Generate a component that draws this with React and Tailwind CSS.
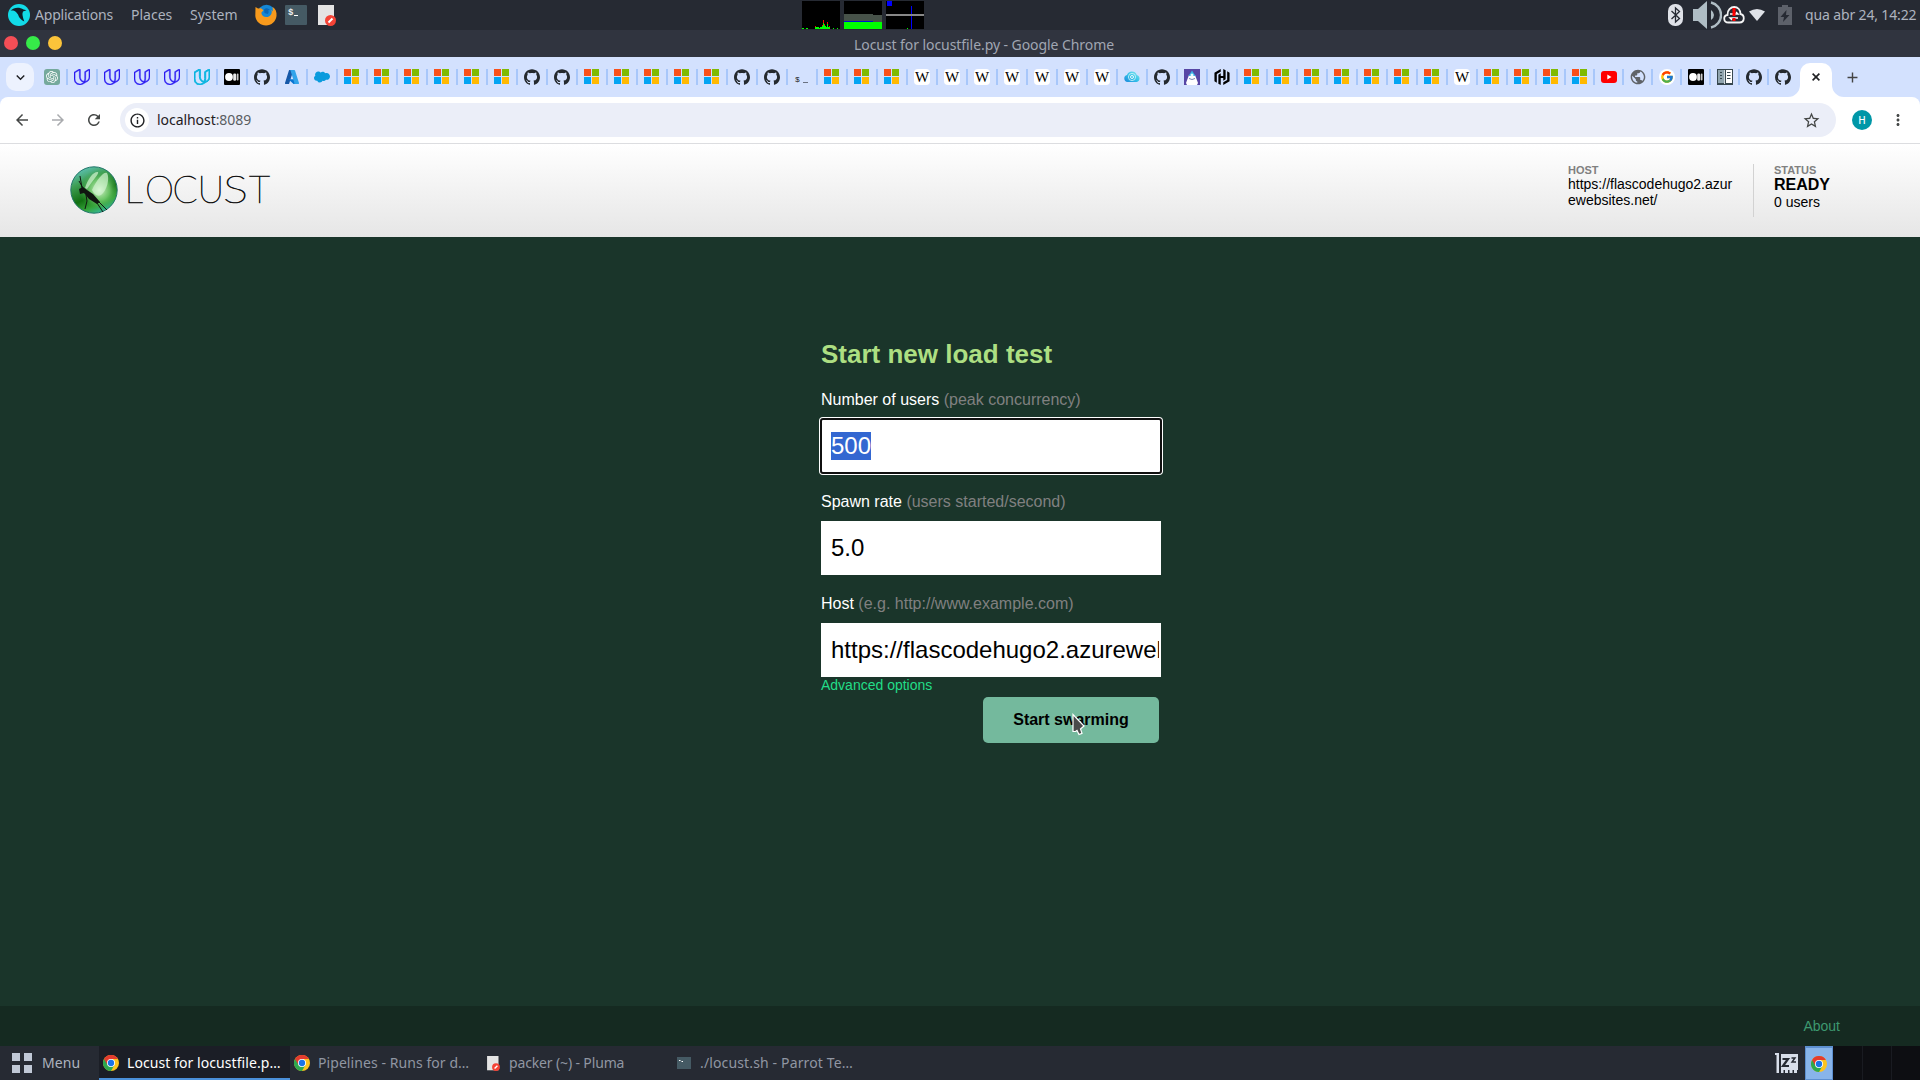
import React from "react";
import { SiUdacity, SiGithub, SiSalesforce, SiHashicorp, SiOpenai } from "react-icons/si";
import { FcGoogle } from "react-icons/fc";
import { MdArrowBack, MdArrowForward, MdRefresh, MdStarBorder, MdMoreVert, MdExpandMore, MdInfoOutline, MdAdd, MdPublic } from "react-icons/md";

const UI = "font-['Noto_Sans',sans-serif]";
const PAGE = "font-['Liberation_Sans',Arial,sans-serif]";

function Microsoft() {
  return (
    <svg className="size-4" viewBox="0 0 16 16" shapeRendering="crispEdges">
      <path fill="#f9501b" d="M0 0h7v7H0z" />
      <path fill="#80ba01" d="M8 0h7v7H8z" />
      <path fill="#03a4f3" d="M0 8h7v7H0z" />
      <path fill="#ffb901" d="M8 8h7v7H8z" />
    </svg>
  );
}

function Medium() {
  return (
    <svg className="size-4" viewBox="0 0 16 16">
      <rect width="16" height="16" rx="1" fill="#000" />
      <circle cx="5" cy="8" r="3.900" fill="#fff" />
      <rect x="9.200" y="4.400" width="3" height="7.400" rx="1.400" fill="#e8e8e8" />
      <rect x="12.800" y="4.600" width="1.700" height="7" rx=".8" fill="#c8c8c8" />
    </svg>
  );
}

function Azure() {
  return (
    <svg className="size-4" viewBox="0 0 16 16">
      <path d="M5.300 1h4.200L5.200 14.400q-.2.6-.8.6H1.600q-.9 0-.6-.9L4.900 1.600z" fill="#1558a8" />
      <path d="M4.400 10.200h7L13 15H9.500z" fill="#0a74d1" />
      <path d="M6 1h4.300q.5 0 .7.6l4 12.500q.3.900-.6.900H9.800q.9 0 .6-.9L6.500 1.600z" fill="#31a3ea" />
    </svg>
  );
}

function Cloud() {
  return (
    <svg className="size-4" viewBox="0 0 16 16">
      <defs>
        <linearGradient id="cloudFill" x1="0" x2="1" y1="1" y2="0">
          <stop offset="0" stopColor="#1b87dc" />
          <stop offset=".5" stopColor="#35c3e8" />
          <stop offset="1" stopColor="#8be8f0" />
        </linearGradient>
      </defs>
      <path fill="url(#cloudFill)" d="M3.500 13A3.500 3.500 0 0 1 3 6.100 5.200 5.200 0 0 1 12.800 6a3.600 3.600 0 0 1-.1 7z" />
      <circle cx="8" cy="8" r="3.600" fill="none" stroke="#d6f6fb" strokeWidth=".8" />
      <circle cx="8" cy="8" r="1.500" fill="none" stroke="#fff" strokeWidth=".9" />
    </svg>
  );
}

function Mountain() {
  return (
    <svg className="size-4" viewBox="0 0 16 16">
      <path fill="#5746a5" d="M0 0h16v16H0z" />
      <path fill="#fff" d="M5 6h6l3 8-1 2H3l-1-2z" />
      <path fill="#3db4e5" d="M8 1.500 11.500 7H4.500z" />
      <circle cx="8" cy="6" r="1.500" fill="#e9fbff" />
      <path d="M5 9.500q3 2 6 0" stroke="#7d85b2" fill="none" />
    </svg>
  );
}

function Book() {
  return (
    <svg className="size-4" viewBox="0 0 16 16">
      <path fill="#37474f" d="M0 0h16v16H0z" />
      <path fill="#90a4ae" d="M1 1h6v13H1z" />
      <path fill="#fff" d="M9 1h6v13H9z" />
      <path d="M3 3.500h2M3 6.500h2M3 9.500h2M10 3.500h3.500M10 6.500h3.500M10 9.500h3.500" stroke="#37474f" />
      <path fill="#cfd8dc" d="M7 1h1v14H7z" />
    </svg>
  );
}

function YouTube() {
  return (
    <svg className="size-4" viewBox="0 0 16 16">
      <rect y="2" width="16" height="12" rx="3" fill="#f00" />
      <path fill="#fff" d="m6.300 5.600 4.200 2.400-4.200 2.400z" />
    </svg>
  );
}

function Chrome() {
  return (
    <svg className="size-4 shrink-0" viewBox="0 0 48 48">
      <circle cx="24" cy="24" r="24" fill="#fcc31e" />
      <path fill="#2da94f" d="M3.200 12A24 24 0 0 0 24 48L34.400 30 24 24z" />
      <path fill="#e33b2e" d="M3.200 12A24 24 0 0 1 44.800 12H24v12L13.600 30z" />
      <circle cx="24" cy="24" r="12" fill="#fff" />
      <circle cx="24" cy="24" r="9.500" fill="#1a73e8" />
    </svg>
  );
}

function Favicon({ kind }) {
  switch (kind) {
    case "m": return <Microsoft />;
    case "u": return <SiUdacity className="size-4 stroke-[#2c1cf2] stroke-[0.6] text-[#2c1cf2]" />;
    case "c": return <SiUdacity className="size-4 stroke-[#09b5e0] stroke-[1.4] text-[#09b5e0]" />;
    case "g": return <SiGithub className="size-4 text-[#24292e]" />;
    case "o":
      return (
        <span className="flex size-4 items-center justify-center rounded-[3px] bg-[#75a99c]">
          <SiOpenai className="size-3 text-white" />
        </span>
      );
    case "d": return <Medium />;
    case "a": return <Azure />;
    case "s": return <SiSalesforce className="size-4 text-[#0a9bdd]" />;
    case "t": return <span className="flex size-4 items-end gap-[3px] pl-px font-['Liberation_Mono',monospace] text-[8px] leading-[11px] text-[#222]"><span>$</span><i className="mb-[2px] h-px w-[5px] bg-gray-500" /></span>;
    case "w": return <span className="flex size-4 items-center justify-center overflow-hidden rounded-[4px] bg-white font-['Liberation_Serif',serif] text-[15px] leading-4 text-black">W</span>;
    case "l": return <Cloud />;
    case "j": return <Mountain />;
    case "h": return <SiHashicorp className="size-4 text-black" />;
    case "y": return <YouTube />;
    case "p": return <MdPublic className="size-4 scale-110 text-[#5f6368]" />;
    case "G": return <span className="flex size-4 items-center justify-center rounded-full bg-white"><FcGoogle className="size-[14px]" /></span>;
    default: return <Book />;
  }
}

const TABS = "ouuuucdgasmmmmmmggmmmmmggtmmmwwwwwwwlgjhmmmmmmmwmmmmypGdbgg".split("");

function Editor({ className }) {
  return (
    <svg className={className} viewBox="0 0 18 21">
      <path fill="#e4e4e4" d="M0 0h16v20H0z" />
      <circle cx="12.500" cy="15.500" r="5.500" fill="#f44336" />
      <path d="m10.500 17.500 4-4" stroke="#fff" strokeWidth="2" />
    </svg>
  );
}

function TopPanel() {
  return (
    <div className={`${UI} flex h-[30px] shrink-0 items-center bg-[#262a33] text-[14px] text-[#adb3bf]`}>
      <div className="flex w-[600px] items-center pl-2">
        <svg className="size-[22px]" viewBox="0 0 22 22">
          <circle cx="11" cy="11" r="11" fill="#12dbe8" />
          <path fill="#101d29" d="M2.500 6.800C6 3 11.500 2.700 15.500 5.600l3 .6-3.500 1.200q-.8 2-.5 3.600.5 3.500 1.800 6.500-5-2.500-6.300-7L8 8C6 6.500 4.200 6.200 2.500 6.800z" />
        </svg>
        <span className="mb-px ml-[5px] w-24 tracking-[-0.015em]">Applications</span>
        <span className="mb-px w-[59px]">Places</span>
        <span className="mb-px w-[65px]">System</span>
        <svg className="size-[22px]" viewBox="0 0 22 22">
          <circle cx="11.500" cy="10" r="9.200" fill="#1587d4" />
          <path fill="#f79a1c" d="M.5 3 3 4.500l3-.3 2.500 2-2.200 2.500c.3 4 4.700 5.500 8 3.500 2.500-1.600 3-4 2-6.500L18 7.500 17.500 3c3 1.600 4.500 5 4 9-.7 5.500-5 9.500-10.500 9.500S.8 17.500.3 12z" />
          <path fill="#0b67b5" d="M9 5.500q3-2.500 6 .5l-2 .500q1.500 2-.5 3.500l-3-1z" />
        </svg>
        <svg className="ml-2 h-5 w-[22px]" viewBox="0 0 22 20">
          <rect width="22" height="20" rx="1" fill="#455a64" />
          <path d="M9 10.500h4" stroke="#fff" />
          <text x="3" y="10" fontSize="9" fontWeight="bold" fill="#eee" fontFamily="Liberation Mono">$</text>
        </svg>
        <Editor className="ml-[11px] h-[21px] w-[18px]" />
      </div>
      <div className="ml-[202px] flex gap-1">
        <svg className="h-7 w-[38px] bg-black" viewBox="0 0 38 28" shapeRendering="crispEdges">
          <path fill="#0f0" d="M0 27h2v1H0zM4 27h2v1H4zM13 26h4v2h-4zM17 27h1v1h-1zM18 26h2v2h-2zM20 24h1v4h-1zM21 21h1v7h-1zM22 23h1v5h-1zM23 25h1v3h-1zM24 26h1v2h-1zM25 23h1v5h-1zM26 26h2v2h-2zM31 27h1v1h-1zM35 27h1v1h-1z" />
          <path fill="red" d="M13 25h1v1h-1zM21 19h1v3h-1zM22 23h1v1h-1zM25 21h1v2h-1zM27 25h1v1h-1zM20 24h1v1h-1z" />
        </svg>
        <svg className="h-7 w-[38px] bg-black" viewBox="0 0 38 28" shapeRendering="crispEdges">
          <path fill="#475249" d="M0 13h29v8H0zM29 14h9v7h-9z" />
          <path fill="#0010d0" d="M0 20h29v1H0z" />
          <path fill="#0f0" d="M0 21h38v7H0z" />
        </svg>
        <svg className="h-7 w-[38px] bg-black" viewBox="0 0 38 28" shapeRendering="crispEdges">
          <path fill="#00f" d="M1 0h5v5H1zM25 5h1v23h-1z" />
          <path fill="#888" d="M0 13h38v2H0z" />
          <path fill="#0f0" d="M21 27h1v1h-1z" />
        </svg>
      </div>
      <div className="ml-auto flex items-center pr-1">
        <svg className="h-[22px] w-[15px]" viewBox="0 0 15 22">
          <rect width="15" height="22" rx="7" fill="#dfe2e8" />
          <path d="m3.500 7 8 7.500L7.500 18V4l4 3.500-8 7.500" fill="none" stroke="#262a33" strokeWidth="1.300" />
        </svg>
        <svg className="ml-[10px] h-[30px] w-[29px]" viewBox="0 0 29 30">
          <path fill="#b0bec5" d="M0 9h5l9-8v28l-9-8H0zM18 10q3 2 3 5t-3 5z" />
          <path fill="none" stroke="#b0bec5" strokeWidth="2.400" d="M18 2.500a12.800 12.800 0 0 1 0 25" />
        </svg>
        <svg className="ml-px h-[18px] w-[22px]" viewBox="0 0 22 18">
          <path fill="none" stroke="#f5f5f5" strokeWidth="1.800" d="M5.500 16.500C0 16.500 0 9.500 4.500 9 4 4 8 1 11.200 1c3.500 0 6.200 2.500 6.300 7C22 9 22 16.500 16.500 16.500z" />
          <path d="M7 8h8l-2-2M15 12H7l2 2" stroke="#fff" strokeWidth="1.400" fill="none" />
          <path fill="red" d="M9.500 2h3v8h-3zM9.500 12h3v3h-3z" />
        </svg>
        <svg className="ml-1 h-3 w-4" viewBox="0 0 16 12"><path fill="#dfe2e8" d="M0 2.500q8-5 16 0L8 12z" /></svg>
        <svg className="ml-[13px] h-5 w-[14px]" viewBox="0 0 14 20">
          <path fill="#5d616a" d="M4 0h6v2h4v18H0V2h4z" />
          <path fill="#262a33" d="m8.500 5-6 7h3.500l-1 5 6.500-7H8z" />
        </svg>
        <span className="mb-px ml-[13px] w-[111px] tracking-[-0.01em] whitespace-nowrap">qua abr 24, 14:22</span>
      </div>
    </div>
  );
}

function TitleBar() {
  return (
    <div className={`${UI} grid h-[27px] shrink-0 grid-cols-[854px_1fr] items-center bg-[#30343f] text-[14px] tracking-[-0.005em] text-[#a0a6b2]`}>
      <div className="-mt-px flex gap-2 pl-1">
        <i className="size-[14px] rounded-full bg-[#f54e56]" />
        <i className="size-[14px] rounded-full bg-[#36eb49]" />
        <i className="size-[14px] rounded-full bg-[#fcc43a]" />
      </div>
      <span className="mt-[3px] leading-5">Locust for locustfile.py - Google Chrome</span>
    </div>
  );
}

function TabStrip() {
  return (
    <div className="flex h-10 shrink-0 items-center bg-[#d3e1fe]">
      <div className="ml-1.5 mr-1 flex size-7 items-center justify-center rounded-[10px] bg-[#edf2fe] text-[#1f2023]">
        <MdExpandMore className="size-[17px]" />
      </div>
      {TABS.map((kind, i) => (
        <div key={i} className={i > 48 ? "flex w-[29px] shrink-0 items-center justify-between pl-1.5" : "flex w-[30px] shrink-0 items-center justify-between pl-1.5"}>
          <Favicon kind={kind} />
          <i className={i === TABS.length - 1 ? "h-4 w-0.5" : "h-4 w-0.5 bg-[#a8c7fa]"} />
        </div>
      ))}
      <div className="ml-[-10px] flex h-10 shrink-0 items-end">
        <svg className="size-3" viewBox="0 0 12 12"><path fill="#fff" d="M12 0v12H0A12 12 0 0 0 12 0z" /></svg>
        <div className="flex h-[34px] w-8 items-center justify-center rounded-t-[10px] bg-white pb-[6px]">
          <svg className="size-2" viewBox="0 0 8 8"><path d="m.6.6 6.800 6.800M7.400.6.6 7.400" stroke="#1f2023" strokeWidth="1.600" /></svg>
        </div>
        <svg className="size-3" viewBox="0 0 12 12"><path fill="#fff" d="M0 0v12h12A12 12 0 0 1 0 0z" /></svg>
      </div>
      <MdAdd className="size-[17px] text-[#444]" />
    </div>
  );
}

function Toolbar() {
  return (
    <div className="shrink-0 bg-[#d3e1fe]">
      <div className={`${UI} flex h-[47px] items-center rounded-t-[8px] border-b border-[#dcdde0] bg-white text-[#444746]`}>
        <div className="flex w-[120px] items-center gap-[18px] pl-[13px]">
          <MdArrowBack className="size-[18px]" />
          <MdArrowForward className="size-[18px] text-[#a9abae]" />
          <MdRefresh className="size-[18px]" />
        </div>
        <div className="flex h-[34px] w-[1716px] items-center rounded-full bg-[#ebeef8] pl-[5px]">
          <span className="flex size-6 items-center justify-center rounded-full bg-white text-[#1f2023]"><MdInfoOutline className="size-[17px]" /></span>
          <span className="mb-px ml-2 text-[14px] tracking-[-0.004em] text-[#1f2023]">localhost<span className="text-[#5a5d62]">:8089</span></span>
          <MdStarBorder className="ml-auto mr-[15px] size-[19px]" />
        </div>
        <span className="ml-4 flex size-5 items-center justify-center rounded-full bg-[#0097a7] text-[10px] font-medium text-white">H</span>
        <MdMoreVert className="ml-[17px] size-[18px]" />
      </div>
    </div>
  );
}

function LocustLogo() {
  return (
    <svg className="h-12 w-[204px]" viewBox="0 0 204 48" role="img" aria-label="Locust">
      <defs>
        <linearGradient id="orb" x1=".2" x2=".65" y1="0" y2="1">
          <stop offset="0" stopColor="#62c6c4" />
          <stop offset=".3" stopColor="#3f9f55" />
          <stop offset=".62" stopColor="#126f12" />
          <stop offset=".82" stopColor="#35a53a" />
          <stop offset="1" stopColor="#35b9a0" />
        </linearGradient>
        <radialGradient id="glow" cx=".62" cy=".5" r=".45">
          <stop offset="0" stopColor="#e2fbd9" />
          <stop offset=".5" stopColor="#82d67a" stopOpacity=".75" />
          <stop offset="1" stopColor="#2b9130" stopOpacity="0" />
        </radialGradient>
      </defs>
      <circle cx="24" cy="24" r="23.200" fill="url(#orb)" stroke="#23766a" />
      <circle cx="24" cy="24" r="22.500" fill="url(#glow)" />
      <path fill="#d3f3d2" fillOpacity=".7" d="M15 22C18 12 24 5 28 6q1 1-3 6t-8 11zM22 24C27 13 34 5 37 7c3 5 0 18-6 22-4 2-7-1-9-5z" />
      <path fill="#101510" d="m9 23 4-2 4 3 6 4 7 8-3 2-8-5-5-6-4 1z" />
      <path fill="none" stroke="#101510" strokeWidth="1" d="m12 22-2-12M13 22 9 15M16 29l1 6-2 8M25 34l8 12M27 34l10 10" />
      <g fontFamily="Lato" fontWeight="200" fontSize="37" fill="#111" stroke="#111" strokeWidth=".7">
        <text x="54.500 75 102.500 127.500" y="37">LOCU</text>
        <text x="153" y="37" textLength="25" lengthAdjust="spacingAndGlyphs">S</text>
        <text x="179" y="37">T</text>
      </g>
    </svg>
  );
}

function Header() {
  return (
    <header className={`${PAGE} flex h-[93px] shrink-0 bg-linear-to-b from-white to-[#e6e6e6] pl-[70px] text-black`}>
      <div className="pt-[22px]"><LocustLogo /></div>
      <div className="ml-auto flex pt-5">
        <div className="h-[53px] w-[186px] border-r border-[#d2d2d2]">
          <div className="text-[11px] leading-3 font-bold text-[#808080]">HOST</div>
          <div className="text-sm leading-4"><div>https://flascodehugo2.azur</div><div>ewebsites.net/</div></div>
        </div>
        <div className="w-[166px] pl-5">
          <div className="text-[11px] leading-3 font-bold text-[#808080]">STATUS</div>
          <div className="text-base leading-[18px] font-bold">READY</div>
          <div className="text-sm leading-4">0 users</div>
        </div>
      </div>
    </header>
  );
}

function Field({ label, hint, children }) {
  return (
    <div className="mb-5">
      <div className="mb-[10px] text-base leading-[18px] text-white">{label} <span className="text-[#808080]">{hint}</span></div>
      {children}
    </div>
  );
}

function Cursor() {
  return (
    <svg className="absolute top-[16px] left-[89px] h-[23px] w-[15px]" viewBox="0 0 15 23">
      <path fill="#4a4a4a" stroke="#fff" strokeWidth="1.200" d="M1 1.500v17h2.500l1.500-1 2 4 3-1.200-1.500-4.300 3.500-3z" />
    </svg>
  );
}

function Form() {
  return (
    <main className={`${PAGE} flex-1 bg-[#1a352a] pt-[102px]`}>
      <div className="ml-[821px] w-[340px]">
        <h2 className="mb-[21px] text-[26px] leading-[31px] font-bold whitespace-nowrap text-[#addf82]">Start new load test</h2>
        <Field label="Number of users" hint="(peak concurrency)">
          <div className="flex h-[54px] items-center rounded-[2px] bg-white pl-[10px] text-2xl outline-2 -outline-offset-1 outline-[#101010] ring-2 ring-white">
            <span className="h-7 bg-[#3367d1] leading-7 text-white">500</span>
          </div>
        </Field>
        <Field label="Spawn rate" hint="(users started/second)">
          <div className="flex h-[54px] items-center bg-white pl-[10px] text-2xl text-black">5.0</div>
        </Field>
        <div>
          <div className="mb-[10px] text-base leading-[18px] text-white">Host <span className="text-[#808080]">(e.g. http://www.example.com)</span></div>
          <div className="flex h-[54px] items-center bg-white pr-[2px] pl-[10px] text-2xl text-black">
            <span className="overflow-hidden whitespace-nowrap">https://flascodehugo2.azurewebsites.net/</span>
          </div>
        </div>
        <div className="h-5 text-sm leading-4 text-[#22dd88]">Advanced options</div>
        <div className="relative ml-[162px] flex h-[46px] w-44 items-center justify-center rounded-[5px] bg-[#74b99d] text-base font-bold text-black">
          Start swarming
          <Cursor />
        </div>
      </div>
    </main>
  );
}

function Terminal() {
  return (
    <svg className="h-3 w-[14px]" viewBox="0 0 14 12">
      <path fill="#455a64" d="M0 0h14v12H0z" />
      <path stroke="#fff" d="M2 3.500h1.500M4.500 4.500H6" />
    </svg>
  );
}

function TaskBar() {
  return (
    <div className={`${UI} flex h-[34px] shrink-0 bg-[#262a33] text-[14px] tracking-[0.005em] text-[#9096a2]`}>
      <div className="flex w-[99px] items-center pl-3 text-[#adb3bf]">
        <div className="grid grid-cols-2 gap-1"><i className="size-2 bg-[#c0c8d6]" /><i className="size-2 bg-[#c0c8d6]" /><i className="size-2 bg-[#c0c8d6]" /><i className="size-2 bg-[#c0c8d6]" /></div>
        <span className="mb-px ml-[10px]">Menu</span>
      </div>
      <div className="flex w-[191px] items-center border-b-2 border-[#4a90d9] bg-[#1b1e26] pt-0.5 pl-1 text-white"><Chrome /><span className="mb-px ml-2 whitespace-nowrap">Locust for locustfile.p…</span></div>
      <div className="flex w-[191px] items-center pl-1"><Chrome /><span className="mb-px ml-2 whitespace-nowrap">Pipelines - Runs for d…</span></div>
      <div className="flex w-[191px] items-center pl-1.5"><Editor className="h-[15px] w-[13px]" /><span className="mb-px ml-[9px] tracking-[-0.01em] whitespace-nowrap">packer (~) - Pluma</span></div>
      <div className="flex w-[191px] items-center pl-[5px]"><Terminal /><span className="mb-px ml-[9px] tracking-[0.01em] whitespace-nowrap">./locust.sh - Parrot Te…</span></div>
      <div className="ml-auto flex">
        <svg className="mt-[7px] mr-[7px] h-5 w-[23px]" viewBox="0 0 23 20">
          <path fill="#d8deea" d="M0 0h4v20H1.500V2H0zM6 1h17v16h-1v3h-3v-3h-1.500v3h-3v-3H13v3h-3v-3H8.500v3H6z" />
          <path d="M7.500 6H13l-5 7h6" stroke="#262a33" strokeWidth="2.200" fill="none" />
          <path d="M16.500 5H20l-3 4h4" stroke="#262a33" strokeWidth="1.400" fill="none" />
        </svg>
        <div className="flex w-7 items-center justify-center border border-t-2 border-[#5d8fd0] bg-[#88b4ea]"><Chrome /></div>
        <i className="w-[30px] border-r border-[#191b21] bg-[#0d0e12]" />
        <i className="w-[29px] border-r border-[#191b21] bg-[#0d0e12]" />
        <i className="w-7 bg-[#0d0e12]" />
      </div>
    </div>
  );
}

export default function App() {
  return (
    <div className="flex h-[1080px] w-[1920px] flex-col overflow-hidden">
      <TopPanel />
      <TitleBar />
      <TabStrip />
      <Toolbar />
      <Header />
      <Form />
      <footer className={`${PAGE} flex h-10 shrink-0 items-center justify-end bg-[#152a21] pr-20 text-sm text-[#3d9970]`}>About</footer>
      <TaskBar />
    </div>
  );
}
